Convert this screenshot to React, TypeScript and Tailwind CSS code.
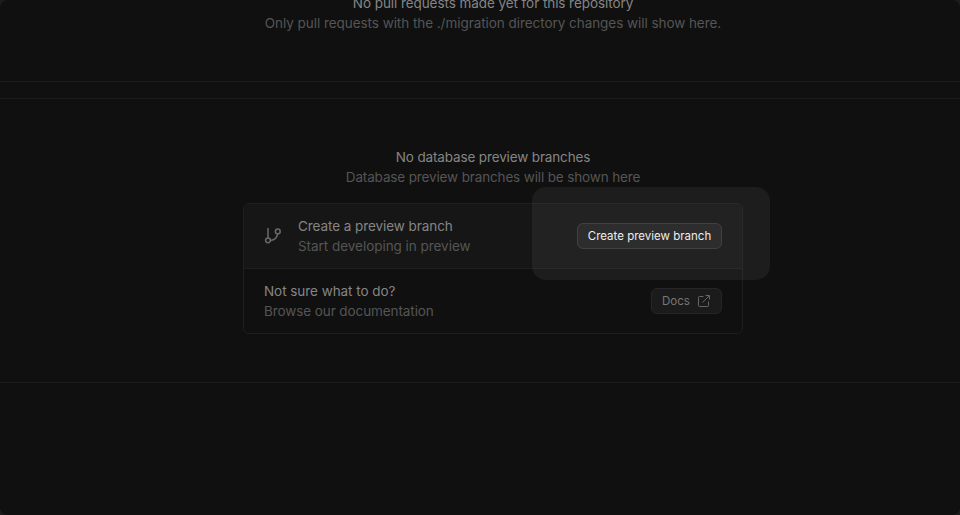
function BranchIcon() {
  return (
    <svg width="18" height="18" viewBox="0 0 18 18" fill="none" stroke="#696969" strokeWidth="1.5" strokeLinecap="round">
      <path d="M4 1.500v9.300M13.600 6.900c-.6 3.900-3 6.200-7 6.500" />
      <circle cx="4" cy="13.300" r="2.400" />
      <circle cx="13.800" cy="4.400" r="2.400" />
    </svg>
  );
}

function ExternalIcon() {
  return (
    <svg width="14" height="14" viewBox="0 0 14 14" fill="none" stroke="#666666" strokeWidth="1">
      <path d="M6.500 2.500H2.500A1 1 0 0 0 1.500 3.500v8A1 1 0 0 0 2.500 12.500h8A1 1 0 0 0 11.500 11.500V7.500M8.500 1.500h4v4M12.500 1.500 5.500 8.500" />
    </svg>
  );
}

export default function App() {
  return (
    <div className="h-[515px] w-[960px] overflow-hidden bg-[#1c1c1c] font-['Inter',sans-serif] text-[13.5px] leading-5">
      <div className="relative h-full overflow-hidden rounded-lg bg-[#101010]">
        <section className="h-[82px] overflow-hidden border-b border-[#1b1b1b] pl-[26px] text-center whitespace-nowrap">
          <p className="-mt-[7px] tracking-[-0.07px] text-[#858585]">No pull requests made yet for this repository</p>
          <p className="tracking-[-0.05px] text-[#555555]">
            Only pull requests with the ./migration directory changes will show here.
          </p>
        </section>

        <section className="mt-4 h-[285px] border-y border-[#1b1b1b] pt-12 pl-[26px]">
          <div className="text-center whitespace-nowrap">
            <p className="tracking-[-0.14px] text-[#858585]">No database preview branches</p>
            <p className="tracking-[-0.14px] text-[#555555]">Database preview branches will be shown here</p>
          </div>
          <div className="mx-auto mt-4 w-[500px] rounded-md border border-[#1e1e1e] whitespace-nowrap">
            <div className="flex h-[65px] items-center rounded-t-[5px] border-b border-[#1e1e1e] bg-[#161616] px-5">
              <BranchIcon />
              <div className="ml-4 flex-1">
                <p className="tracking-[-0.07px] text-[#858585]">Create a preview branch</p>
                <p className="tracking-[-0.04px] text-[#555555]">Start developing in preview</p>
              </div>
              <button className="z-10 flex h-[26px] w-[145px] items-center justify-center rounded-md border border-[#414141] bg-[#2d2d2d] text-[11.5px] text-[#ededed]">
                Create preview branch
              </button>
            </div>
            <div className="flex h-16 items-center px-5">
              <div className="flex-1">
                <p className="tracking-[-0.05px] text-[#858585]">Not sure what to do?</p>
                <p className="tracking-[-0.09px] text-[#555555]">Browse our documentation</p>
              </div>
              <button className="flex h-[26px] w-[71px] items-center justify-between rounded-md border border-[#262626] bg-[#1b1b1b] px-2.5 text-[11.5px] text-[#777777]">
                Docs
                <ExternalIcon />
              </button>
            </div>
          </div>
        </section>

        <div className="pointer-events-none absolute top-[187px] left-[532px] h-[93px] w-[238px] rounded-[14px] bg-white/[0.055]" />
      </div>
    </div>
  );
}
